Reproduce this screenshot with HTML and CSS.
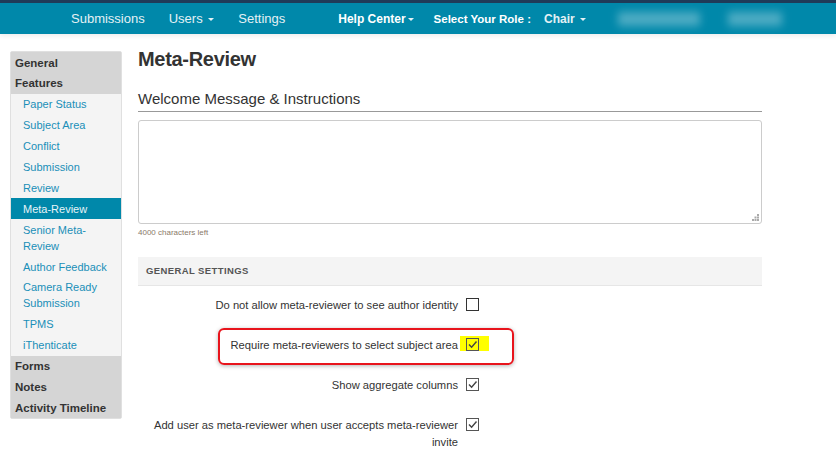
FILE: index.html
```html
<!DOCTYPE html>
<html>
<head>
<meta charset="utf-8">
<link rel="stylesheet" href="styles.css">
</head>
<body>
<header class="topbar">
  <nav class="nav">
    <span class="nav-item">Submissions</span>
    <span class="nav-item">Users <span class="caret"></span></span>
    <span class="nav-item">Settings</span>
    <span class="nav-item bold help">Help Center<span class="caret"></span></span>
    <span class="nav-item bold role">Select Your Role :</span>
    <span class="nav-item bold chair">Chair <span class="caret"></span></span>
    <span class="blur b1"></span>
    <span class="blur b2"></span>
  </nav>
</header>
<div class="page">
  <aside class="sidebar">
    <div class="sec">General</div>
    <div class="sec">Features</div>
    <div class="sub">Paper Status</div>
    <div class="sub">Subject Area</div>
    <div class="sub">Conflict</div>
    <div class="sub">Submission</div>
    <div class="sub">Review</div>
    <div class="sub active">Meta-Review</div>
    <div class="sub">Senior Meta-<br>Review</div>
    <div class="sub">Author Feedback</div>
    <div class="sub">Camera Ready<br>Submission</div>
    <div class="sub">TPMS</div>
    <div class="sub">iThenticate</div>
    <div class="sec">Forms</div>
    <div class="sec">Notes</div>
    <div class="sec">Activity Timeline</div>
  </aside>
  <main class="main">
    <h1 class="title">Meta-Review</h1>
    <h2 class="legend">Welcome Message &amp; Instructions</h2>
    <div class="textarea">
      <svg class="grip" width="7" height="7" viewBox="0 0 7 7"><rect x="5" y="0" width="2" height="2" fill="#aaa"/><rect x="2.5" y="2.5" width="2" height="2" fill="#aaa"/><rect x="5" y="2.5" width="2" height="2" fill="#aaa"/><rect x="0" y="5" width="2" height="2" fill="#aaa"/><rect x="2.5" y="5" width="2" height="2" fill="#aaa"/><rect x="5" y="5" width="2" height="2" fill="#aaa"/></svg>
    </div>
    <div class="chars">4000 characters left</div>
    <div class="band">GENERAL SETTINGS</div>
    <div class="row">
      <div class="label">Do not allow meta-reviewer to see author identity</div>
      <span class="cb"></span>
    </div>
    <div class="row highlight">
      <div class="label">Require meta-reviewers to select subject area</div>
      <span class="cb checked yellow"><svg width="11" height="11" viewBox="0 0 11 11"><path d="M2 5.5 L4.6 8.2 L9.5 2.5" fill="none" stroke="#444" stroke-width="1.4"/></svg></span>
      <span class="mark"></span>
    </div>
    <div class="row">
      <div class="label">Show aggregate columns</div>
      <span class="cb checked"><svg width="11" height="11" viewBox="0 0 11 11"><path d="M2 5.5 L4.6 8.2 L9.5 2.5" fill="none" stroke="#444" stroke-width="1.4"/></svg></span>
    </div>
    <div class="row">
      <div class="label">Add user as meta-reviewer when user accepts meta-reviewer invite</div>
      <span class="cb checked"><svg width="11" height="11" viewBox="0 0 11 11"><path d="M2 5.5 L4.6 8.2 L9.5 2.5" fill="none" stroke="#444" stroke-width="1.4"/></svg></span>
    </div>
  </main>
</div>
</body>
</html>
```

FILE: styles.css
```css
* { box-sizing: border-box; }
html, body { margin: 0; padding: 0; }
body {
  font-family: "Liberation Sans", Arial, sans-serif;
  background: #fff;
  color: #333;
  width: 836px;
  height: 450px;
  overflow: hidden;
}
.topbar {
  height: 34px;
  background: #0088aa;
  border-top: 3px solid #1f3b58;
  box-shadow: 0 2px 5px rgba(0,0,0,0.08);
}
.nav {
  position: relative;
  height: 31px;
  display: flex;
  align-items: center;
  padding-left: 71px;
  font-size: 13px;
  color: #e4f1f5;
}
.nav-item { white-space: nowrap; }
.nav-item:nth-child(1) { margin-right: 24px; }
.nav-item:nth-child(2) { margin-right: 24px; }
.nav-item:nth-child(3) { margin-right: 53px; }
.help { margin-right: 20px; }
.role { margin-right: 13px; }
.bold { font-weight: bold; font-size: 12px; color: #fff; }
.role { font-size: 11.5px; }
.chair { color: #e4f1f5; }
.caret {
  display: inline-block;
  width: 0; height: 0;
  border-left: 3px solid transparent;
  border-right: 3px solid transparent;
  border-top: 3px solid #e4f1f5;
  vertical-align: middle;
  margin-left: 2px;
}
.blur {
  position: absolute;
  top: 9px;
  height: 14px;
  background: rgba(255,255,255,0.3);
  filter: blur(4px);
}
.b1 { left: 618px; width: 82px; }
.b2 { left: 728px; width: 54px; }

.page {
  display: flex;
  align-items: flex-start;
  padding: 17px 0 0 10px;
}
.sidebar {
  width: 112px;
  background: #f4f4f4;
  border: 1px solid #e0e0e0;
  border-radius: 2px;
  font-size: 11px;
}
.sec {
  background: #d5d5d5;
  font-weight: bold;
  font-size: 11.5px;
  color: #333;
  line-height: 16px;
  padding: 2.5px 4px 2.4px;
}
.sub {
  color: #1a8fb8;
  line-height: 16px;
  padding: 2.5px 12px 2.4px;
}
.sub.active {
  background: #0088aa;
  color: #e8f4f8;
}
.main {
  width: 624px;
  margin-left: 16px;
}
.title {
  margin: -6px 0 0;
  font-size: 20px;
  font-weight: bold;
  color: #333;
  line-height: 28px;
  letter-spacing: -0.3px;
}
.legend {
  margin: 17px 0 0;
  font-size: 15px;
  font-weight: normal;
  color: #333;
  line-height: 18px;
  padding-bottom: 3px;
  border-bottom: 1px solid #999;
}
.textarea {
  position: relative;
  margin-top: 8px;
  height: 104px;
  border: 1px solid #ccc;
  border-radius: 3px;
}
.grip { position: absolute; right: 2px; bottom: 2px; }
.chars {
  margin-top: 4px;
  font-size: 8px;
  color: #8a7a6a;
  line-height: 10px;
}
.band {
  margin-top: 19px;
  height: 29px;
  background: #f4f4f4;
  border-bottom: 1px solid #e6e6e6;
  font-size: 9.5px;
  font-weight: bold;
  color: #555;
  letter-spacing: 0.4px;
  line-height: 28px;
  padding-left: 8px;
}
.row {
  position: relative;
  display: flex;
  align-items: flex-start;
  margin-top: 11px;
  min-height: 28px;
}
.row + .row { margin-top: 12px; }
.label {
  width: 320px;
  text-align: right;
  font-size: 11.2px;
  line-height: 17px;
  color: #333;
}
.cb {
  position: relative;
  width: 13px;
  height: 13px;
  margin-left: 8px;
  margin-top: 1px;
  border: 1px solid #333;
  background: #fff;
  display: flex;
  align-items: center;
  justify-content: center;
}
.cb.checked { border-color: #555; }
.cb.yellow { background: transparent; z-index: 1; }
.highlight .mark {
  position: absolute;
  left: 322px;
  top: -1px;
  width: 29px;
  height: 15px;
  background: #ffff00;
}
.highlight::after {
  content: "";
  position: absolute;
  left: 80px;
  top: -9px;
  width: 292px;
  height: 33px;
  border: 2px solid #e8141c;
  border-radius: 6px;
  box-shadow: 0 1px 4px rgba(0,0,0,0.3);
}
```
